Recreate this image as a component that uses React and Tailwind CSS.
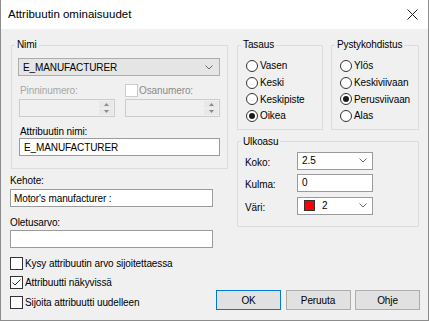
import React from "react";

// Attribuutin ominaisuudet -dialogi

function Chevron() {
  return (
    <svg width="8" height="5" viewBox="0 0 8 5" className="shrink-0">
      <path d="M0.5 0.5 L4 4 L7.5 0.5" fill="none" stroke="#6a6a6a" strokeWidth="1" />
    </svg>
  );
}

function GroupBox({ title, className, children }) {
  return (
    <fieldset className={`min-w-0 border border-[#dcdcdc] ${className}`}>
      <legend className="ml-[3px] px-[2px] leading-[14px]">{title}</legend>
      {children}
    </fieldset>
  );
}

function Radio({ label, checked }) {
  return (
    <div className="flex h-[16.67px] items-center">
      <span className="flex size-[12px] items-center justify-center rounded-full border border-[#333333] bg-white">
        {checked && <span className="size-[6px] rounded-full bg-[#1a1a1a]" />}
      </span>
      <span className="ml-[2px]">{label}</span>
    </div>
  );
}

function CheckBox({ checked, disabled }) {
  return (
    <span
      className={`flex size-[13px] shrink-0 items-center justify-center border bg-white ${
        disabled ? "border-[#cccccc]" : "border-[#333333]"
      }`}
    >
      {checked && (
        <svg width="11" height="11" viewBox="0 0 11 11">
          <path d="M1.5 5.5 L4 8 L9.5 2.5" fill="none" stroke="#333333" strokeWidth="1" />
        </svg>
      )}
    </span>
  );
}

function Spinner() {
  return (
    <div className="flex h-[18px] border border-[#cccccc] bg-[#f0f0f0]">
      <div className="flex-1" />
      <div className="flex w-[16px] flex-col gap-[1px] p-[1px]">
        <div className="flex flex-1 items-center justify-center bg-[#e8e8e8]">
          <svg width="5" height="3" viewBox="0 0 5 3">
            <path d="M0 3 L2.5 0 L5 3 Z" fill="#8a8a8a" />
          </svg>
        </div>
        <div className="flex flex-1 items-center justify-center bg-[#e8e8e8]">
          <svg width="5" height="3" viewBox="0 0 5 3">
            <path d="M0 0 L2.5 3 L5 0 Z" fill="#8a8a8a" />
          </svg>
        </div>
      </div>
    </div>
  );
}

function TextBox({ value, className }) {
  return (
    <div className={`flex h-[18px] items-center border border-[#9b9b9b] bg-white pl-[3px] ${className}`}>
      {value}
    </div>
  );
}

function CheckRow({ label, checked }) {
  return (
    <div className="flex h-[19.5px] items-center">
      <CheckBox checked={checked} />
      <span className="ml-[2px]">{label}</span>
    </div>
  );
}

function Button({ label, primary }) {
  return (
    <button
      className={`flex h-[20px] w-[65px] items-center justify-center border bg-[#e1e1e1] ${
        primary ? "border-[#0078d7]" : "border-[#adadad]"
      }`}
    >
      {label}
    </button>
  );
}

export default function App() {
  return (
    <div className="h-[322px] w-[429px] bg-white font-['Liberation_Sans',Arial,sans-serif] text-[10px] tracking-[-0.1px] text-black">
      <div className="flex h-[321px] flex-col border-x border-b border-[#8c8c8c] bg-[#f0f0f0]">
        {/* otsikkopalkki */}
        <div className="flex h-[29px] items-center justify-between bg-white pl-[7px] pr-[10px]">
          <span className="text-[11.5px] tracking-normal">Attribuutin ominaisuudet</span>
          <svg width="11" height="11" viewBox="0 0 11 11">
            <path d="M0.5 0.5 L10.5 10.5 M10.5 0.5 L0.5 10.5" stroke="#1a1a1a" strokeWidth="1" />
          </svg>
        </div>

        <div className="flex flex-col pt-[9px]">
          <div className="flex">
            {/* vasen sarake */}
            <div className="ml-[9px] flex w-[218px] flex-col">
              <GroupBox title="Nimi" className="ml-[1px]">
                <div className="pb-[12px] pl-[6px] pr-[7px] pt-[6px]">
                  <div className="flex h-[18px] items-center justify-between border border-[#adadad] bg-[#e5e5e5] pl-[4px] pr-[6px]">
                    <span>E_MANUFACTURER</span>
                    <Chevron />
                  </div>
                  <div className="mt-[7px] flex">
                    <div className="ml-[1px] w-[96px]">
                      <div className="flex h-[14px] items-center pl-[1px] text-[#a6a6a6]">Pinninumero:</div>
                      <div className="mt-[2px]">
                        <Spinner />
                      </div>
                    </div>
                    <div className="ml-[10px] w-[95px]">
                      <div className="flex h-[14px] items-center">
                        <CheckBox disabled />
                        <span className="ml-[1px] text-[#8a8a8a]">Osanumero:</span>
                      </div>
                      <div className="mt-[2px]">
                        <Spinner />
                      </div>
                    </div>
                  </div>
                  <div className="ml-[2px] mt-[7px] flex h-[14px] items-center">Attribuutin nimi:</div>
                  <TextBox value="E_MANUFACTURER" className="ml-[1px] pl-[4px]" />
                </div>
              </GroupBox>

              <div className="mt-[4px] flex h-[14px] items-center">Kehote:</div>
              <TextBox value="Motor's manufacturer :" className="mt-[2px] w-[203px]" />
              <div className="mt-[8px] flex h-[14px] items-center">Oletusarvo:</div>
              <TextBox value="" className="mt-[1px] w-[203px]" />
            </div>

            {/* oikea sarake */}
            <div className="ml-[9px] flex w-[182px] flex-col">
              <div className="flex gap-[8px]">
                <GroupBox title="Tasaus" className="w-[86px]">
                  <div className="pb-[4.67px] pl-[8px] pt-[5.67px]">
                    <Radio label="Vasen" />
                    <Radio label="Keski" />
                    <Radio label="Keskipiste" />
                    <Radio label="Oikea" checked />
                  </div>
                </GroupBox>
                <GroupBox title="Pystykohdistus" className="w-[88px]">
                  <div className="pb-[4.67px] pl-[8px] pt-[5.67px]">
                    <Radio label="Ylös" />
                    <Radio label="Keskiviivaan" />
                    <Radio label="Perusviivaan" checked />
                    <Radio label="Alas" />
                  </div>
                </GroupBox>
              </div>

              <GroupBox title="Ulkoasu" className="mt-[5px]">
                <div className="pb-[11px] pl-[7px] pt-[3px]">
                  <div className="flex items-center">
                    <span className="w-[52px] pt-[3px]">Koko:</span>
                    <div className="flex h-[18px] w-[76px] items-center justify-between border border-[#9b9b9b] bg-white pl-[4px] pr-[5px]">
                      <span>2.5</span>
                      <Chevron />
                    </div>
                  </div>
                  <div className="mt-[4px] flex items-center">
                    <span className="w-[52px] pt-[3px]">Kulma:</span>
                    <TextBox value="0" className="w-[76px] pl-[4px]" />
                  </div>
                  <div className="mt-[5px] flex items-center">
                    <span className="w-[52px] pt-[3px]">Väri:</span>
                    <div className="flex h-[18px] w-[76px] items-center border border-[#9b9b9b] bg-white pl-[6px] pr-[5px]">
                      <span className="size-[11px] border border-[#333333] bg-[#ff0000]" />
                      <span className="ml-[7px] flex-1">2</span>
                      <Chevron />
                    </div>
                  </div>
                </div>
              </GroupBox>
            </div>
          </div>

          {/* alaosa: valintaruudut ja painikkeet */}
          <div className="flex items-start justify-between">
            <div className="ml-[9px] mt-[5.25px] flex flex-col">
              <CheckRow label="Kysy attribuutin arvo sijoitettaessa" />
              <CheckRow label="Attribuutti näkyvissä" checked />
              <CheckRow label="Sijoita attribuutti uudelleen" />
            </div>
            <div className="mr-[8px] mt-[42px] flex gap-[4.5px]">
              <Button label="OK" primary />
              <Button label="Peruuta" />
              <Button label="Ohje" />
            </div>
          </div>
        </div>
      </div>
    </div>
  );
}
